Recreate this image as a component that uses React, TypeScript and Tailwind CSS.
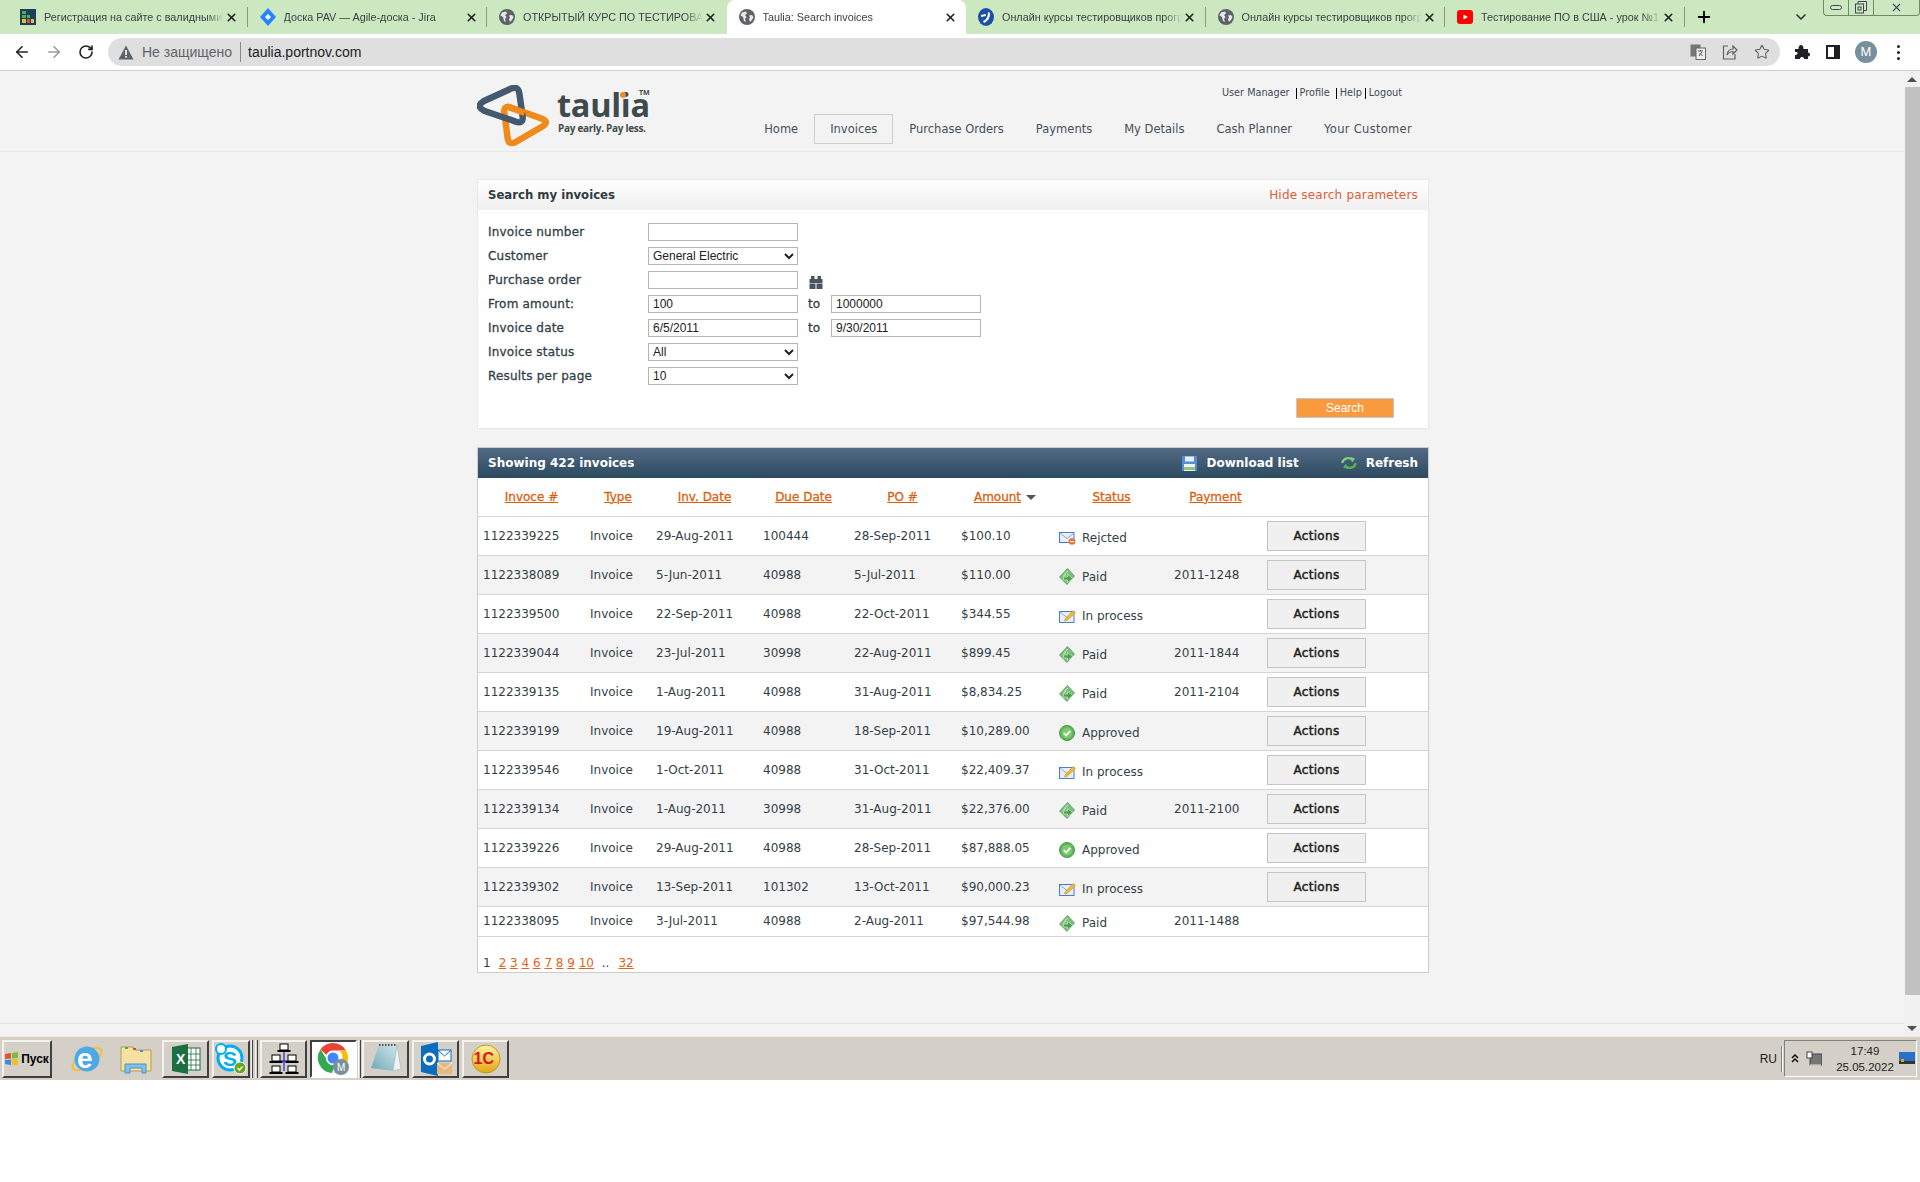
import { ArrowLeft, ArrowRight, RotateCw, Star, ChevronDown, Plus, X } from "lucide-react";
import type { ReactNode } from "react";

function Globe() {
  return (
    <svg width="16" height="16" viewBox="0 0 16 16">
      <circle cx="8" cy="8" r="8" fill="#5f6368" />
      <path d="M3 3.5 7 2.5 8 4.5 6 6 7.5 8 6 10 7 13 5 12 4 8 1.5 6.5ZM10 6.5 13 6 14.5 8 13 11 11 13 10 10 11 8.5Z" fill="#fff" opacity="0.85" />
    </svg>
  );
}

function JiraBoard() {
  return (
    <svg width="16" height="16" viewBox="0 0 16 16">
      <rect width="16" height="16" fill="#1f3d5c" />
      <rect x="2" y="2" width="4" height="3" fill="#4caf50" />
      <rect x="2" y="6" width="4" height="3" fill="#4caf50" />
      <rect x="2" y="10" width="4" height="4" fill="#e6c229" />
      <rect x="7" y="6" width="3" height="3" fill="#4caf50" />
      <rect x="7" y="10" width="3" height="4" fill="#d94f3d" />
      <rect x="11" y="10" width="3" height="4" fill="#e6c229" />
    </svg>
  );
}

function JiraDiamond() {
  return (
    <svg width="16" height="18" viewBox="0 0 16 18">
      <path d="M8 0 16 9 8 18 0 9Z" fill="#2684ff" />
      <path d="M8 6 11 9 8 12 5 9Z" fill="#fff" />
    </svg>
  );
}

function BlueLogo() {
  return (
    <svg width="16" height="18" viewBox="0 0 16 18">
      <ellipse cx="8" cy="9" rx="8" ry="9" fill="#1c4fa8" />
      <path d="M5 13C8 12 10 9 10 4L12 5C12 10 10 13 6 15Z" fill="#fff" />
      <path d="M3 7 8 6 8 8 3 9Z" fill="#fff" />
    </svg>
  );
}

function YouTube() {
  return (
    <svg width="16" height="16" viewBox="0 0 16 16">
      <rect y="1" width="16" height="14" rx="3" fill="#f00" />
      <path d="M6.5 5.5 11 8 6.5 10.5Z" fill="#fff" />
    </svg>
  );
}

const tabs: { icon: ReactNode; title: string; active?: boolean }[] = [
  { icon: <JiraBoard />, title: "Регистрация на сайте с валидными данными" },
  { icon: <JiraDiamond />, title: "Доска PAV — Agile-доска - Jira" },
  { icon: <Globe />, title: "ОТКРЫТЫЙ КУРС ПО ТЕСТИРОВАНИЮ" },
  { icon: <Globe />, title: "Taulia: Search invoices", active: true },
  { icon: <BlueLogo />, title: "Онлайн курсы тестировщиков программного" },
  { icon: <Globe />, title: "Онлайн курсы тестировщиков программного" },
  { icon: <YouTube />, title: "Тестирование ПО в США - урок №1 курса" },
];

function TabStrip() {
  return (
    <div className="flex h-[34px] items-end bg-[#cce8c0] pl-2 font-['Liberation_Sans',sans-serif] text-[10.8px] text-[#3c4043]">
      {tabs.map((t, i) => (
        <div
          key={i}
          className={
            t.active
              ? "flex h-[34px] w-[239.5px] shrink-0 items-center rounded-t-lg bg-white pl-3"
              : "flex h-[34px] w-[239.5px] shrink-0 items-center pl-3"
          }
        >
          <span className="flex w-4 shrink-0 justify-center">{t.icon}</span>
          <span className="ml-2 w-[180px] shrink-0 overflow-hidden whitespace-nowrap [mask-image:linear-gradient(to_right,black_90%,transparent)]">
            {t.title}
          </span>
          <X size={13} strokeWidth={3} className="ml-[1px] shrink-0 text-[#222]" />
          {!t.active && i !== 2 && <span className="ml-[8.5px] h-5 w-px shrink-0 bg-[#8a9a84]" />}
        </div>
      ))}
      <div className="flex h-[34px] w-[38px] shrink-0 items-center justify-center">
        <Plus size={18} strokeWidth={2.5} className="text-black" />
      </div>
      <div className="ml-[68.5px] flex h-[34px] w-[20px] shrink-0 items-center justify-center">
        <ChevronDown size={16} strokeWidth={2.5} className="text-[#333]" />
      </div>
      <div className="mb-auto ml-[12px] flex h-[16px] w-[97px] shrink-0 rounded-b border border-t-0 border-[#6f8a68] text-[#445]">
        <div className="flex w-[25px] items-center justify-center border-r border-[#6f8a68]">
          <span className="h-[5px] w-[12px] rounded-sm border border-[#445]" />
        </div>
        <div className="flex w-[25px] items-center justify-center border-r border-[#6f8a68]">
          <svg width="12" height="13" viewBox="0 0 12 13" fill="none" stroke="#445">
            <rect x="0.5" y="3" width="8" height="9" />
            <path d="M3 3V0.5H11.5V9.5H8.5" />
            <rect x="3" y="6" width="3" height="3" />
          </svg>
        </div>
        <div className="flex flex-1 items-center justify-center">
          <X size={13} strokeWidth={2} />
        </div>
      </div>
    </div>
  );
}

function Toolbar() {
  return (
    <div className="flex h-[37px] items-center border-b border-[#cfcfcf] bg-white pl-[6px] font-['Liberation_Sans',sans-serif]">
      <span className="flex w-8 justify-center">
        <ArrowLeft size={18} strokeWidth={2.2} className="text-[#222]" />
      </span>
      <span className="flex w-8 justify-center">
        <ArrowRight size={18} strokeWidth={2.2} className="text-[#9a9a9a]" />
      </span>
      <span className="flex w-8 justify-center">
        <RotateCw size={16} strokeWidth={2.4} className="text-[#222]" />
      </span>
      <div className="ml-[6px] flex h-[28px] w-[1672px] items-center rounded-full bg-[#dfdfdf] pl-[10px] text-[14px]">
        <svg width="16" height="15" viewBox="0 0 16 15">
          <path d="M8 0.5 15.5 14.5H0.5Z" fill="#5f6368" />
          <rect x="7.2" y="5" width="1.6" height="5" fill="#fff" />
          <rect x="7.2" y="11" width="1.6" height="1.7" fill="#fff" />
        </svg>
        <span className="ml-[8px] text-[#5f6368]">Не защищено</span>
        <span className="ml-2 h-5 w-px shrink-0 bg-[#8a8a8a]" />
        <span className="ml-[7px] text-[#202124]">taulia.portnov.com</span>
        <div className="ml-auto mr-[10px] flex items-center gap-[16px] text-[#5f6368]">
          <svg width="16" height="16" viewBox="0 0 16 16">
            <rect x="0.5" y="0.5" width="10" height="12" fill="#777" />
            <rect x="6" y="4" width="9.5" height="11.5" fill="#eee" stroke="#666" />
            <path d="M8 7H13M10.5 6V7M9 12 12 8M9.5 9 12.5 12" stroke="#555" fill="none" />
          </svg>
          <svg width="16" height="16" viewBox="0 0 16 16" fill="none" stroke="#5f6368" strokeWidth="1.2">
            <path d="M6 2H1.5V15H13V10" />
            <path d="M5 11C5.5 7 8 5 11 5V2L15 6 11 10V7.5C8.5 7.5 6.5 8.5 5 11Z" />
          </svg>
          <Star size={16} strokeWidth={1.6} />
        </div>
      </div>
      <div className="ml-[14px] flex items-center">
        <svg width="16" height="16" viewBox="0 0 16 16" fill="#202124">
          <path d="M1 5H4.5C4.5 2 5.5 1 7 1S9.5 2 9.5 5H14V8.5C15.5 8.5 16 9.5 16 10.5S15.5 12.5 14 12.5V15H10C10 13.5 9 13 8 13S6 13.5 6 15H1V11C2.5 11 3.5 10.5 3.5 9S2.5 8 1 8Z" />
        </svg>
        <span className="ml-[16px] flex h-[14px] w-[14px] border-2 border-r-[6px] border-[#202124]" />
        <span className="ml-[15px] flex h-[22px] w-[22px] items-center justify-center rounded-full bg-[#78909c] text-[13px] text-white">
          M
        </span>
        <span className="ml-[20px] flex flex-col gap-[3px]">
          <i className="h-[3px] w-[3px] rounded-full bg-[#202124]" />
          <i className="h-[3px] w-[3px] rounded-full bg-[#202124]" />
          <i className="h-[3px] w-[3px] rounded-full bg-[#202124]" />
        </span>
      </div>
    </div>
  );
}

function LogoMark() {
  return (
    <svg width="74" height="61" viewBox="2.5 2.5 69 56" fill="none" strokeLinejoin="round">
      <path d="M34 23 62 33Q71 36 63 41L39 55Q32 59 31 51L28 28Q27 21 34 23Z" stroke="#f18a1c" strokeWidth="6" />
      <path d="M9 17 33 6Q41 2 42 10L45 31Q46 39 38 36L9 26Q1 22 9 17Z" stroke="#44596e" strokeWidth="6" />
      <path d="M30 22 47 28" stroke="#f18a1c" strokeWidth="6" />
    </svg>
  );
}

function Header() {
  const nav = ["Home", "Invoices", "Purchase Orders", "Payments", "My Details", "Cash Planner", "Your Customer"];
  return (
    <div className="h-[81px] border-b border-[#e8e8e8]">
      <div className="ml-[477px] flex w-[952px] justify-between">
        <div className="flex pt-[14px]">
          <LogoMark />
          <div className="relative ml-[6px] font-['Open_Sans',sans-serif] text-[#3f4a4c]">
            <div className="mt-[-2px] h-[37px] text-[32.5px] leading-[44px] font-bold tracking-[-0.3px]">taulia</div>
            <div className="mt-[1px] pl-[1px] text-[10px] leading-[14px] font-bold tracking-[-0.3px]">Pay early. Pay less.</div>
            <span className="absolute top-[3px] left-[82px] text-[7px] font-bold">TM</span>
            <span className="absolute top-[7px] left-[63px] h-[6px] w-[6px] rounded-full bg-[#f18a1c]" />
          </div>
        </div>
        <div className="flex flex-col items-end">
          <div className="mt-[15px] flex h-[14px] items-center pr-[27px] text-[9.7px] text-[#3f4a55]">
            <span>User Manager</span>
            <span className="ml-[6px] h-[11px] w-px shrink-0 bg-black" />
            <span className="ml-[3px]">Profile</span>
            <span className="ml-[6px] h-[11px] w-px shrink-0 bg-black" />
            <span className="ml-[3px]">Help</span>
            <span className="ml-[3px] h-[11px] w-px shrink-0 bg-black" />
            <span className="ml-[3px]">Logout</span>
          </div>
          <div className="mt-[14px] flex pr-[1px] text-[11.5px]">
            {nav.map((n) => (
              <span
                key={n}
                className={
                  n === "Invoices"
                    ? "flex h-[30px] items-center border border-[#cfcfcf] px-[15px] pt-px text-[#44505c]"
                    : n === "Your Customer"
                      ? "flex h-[30px] items-center border border-transparent px-[15px] pt-px tracking-[0.3px] text-[#44505c]"
                      : "flex h-[30px] items-center border border-transparent px-[15px] pt-px text-[#44505c]"
                }
              >
                {n}
              </span>
            ))}
          </div>
        </div>
      </div>
    </div>
  );
}

function Field({ label, children }: { label: string; children: ReactNode }) {
  return (
    <div className="flex h-6 items-center">
      <span className="w-[160px] tracking-[0.2px] text-[#333f48] [-webkit-text-stroke:0.3px]">{label}</span>
      {children}
    </div>
  );
}

const inputCls =
  "h-[18px] w-[150px] border border-[#b5b5b5] bg-white px-[4px] font-['Liberation_Sans',sans-serif] text-[12px] text-[#222] outline-none";
const selectCls =
  "h-[18px] w-[150px] border border-[#b5b5b5] bg-white font-['Liberation_Sans',sans-serif] text-[12px] text-[#222] outline-none";

function To() {
  return <span className="w-[33px] pl-[10px] text-[#333f48] [-webkit-text-stroke:0.3px]">to</span>;
}

function SearchPanel() {
  return (
    <div className="mt-[27px] border border-[#e8e8e8] bg-white">
      <div className="flex h-[30px] items-center justify-between bg-gradient-to-b from-white to-[#f0f0f0] px-[10px]">
        <span className="pt-px text-[11.7px] font-bold text-[#2f3a42]">Search my invoices</span>
        <span className="tracking-[0.2px] text-[#d9603a]">Hide search parameters</span>
      </div>
      <div className="pt-[10px] pr-[34px] pb-[10px] pl-[10px]">
        <Field label="Invoice number">
          <input readOnly className={inputCls} />
        </Field>
        <Field label="Customer">
          <select className={selectCls}>
            <option>General Electric</option>
          </select>
        </Field>
        <Field label="Purchase order">
          <input readOnly className={inputCls} />
          <svg width="14" height="13" viewBox="0 0 14 13" className="mt-[5px] ml-[11px]" fill="#4a5560">
            <rect x="2" y="0" width="3.5" height="3" />
            <rect x="8.5" y="0" width="3.5" height="3" />
            <rect x="0.5" y="3" width="13" height="4" />
            <rect x="0.5" y="7.5" width="6" height="5.5" />
            <rect x="7.5" y="7.5" width="6" height="5.5" />
          </svg>
        </Field>
        <Field label="From amount:">
          <input readOnly value="100" className={inputCls} />
          <To />
          <input readOnly value="1000000" className={inputCls} />
        </Field>
        <Field label="Invoice date">
          <input readOnly value="6/5/2011" className={inputCls} />
          <To />
          <input readOnly value="9/30/2011" className={inputCls} />
        </Field>
        <Field label="Invoice status">
          <select className={selectCls}>
            <option>All</option>
          </select>
        </Field>
        <Field label="Results per page">
          <select className={selectCls}>
            <option>10</option>
          </select>
        </Field>
        <div className="mt-[10px] flex justify-end">
          <button className="h-[20px] w-[98px] border border-[#c8c8c8] bg-[#f99a3f] font-['Liberation_Sans',sans-serif] text-[12px] text-white">
            Search
          </button>
        </div>
      </div>
    </div>
  );
}

function StatusIcon({ status }: { status: string }) {
  if (status === "Paid")
    return (
      <svg width="16" height="17" viewBox="0 0 16 17">
        <path d="M8.5 0.5 15.5 8 8 16.5 0.5 9Z" fill="#79c079" stroke="#4c914c" strokeWidth="0.7" />
        <path d="M5.5 6 9 3M4 8.5 7 6" stroke="#cdeccd" strokeWidth="1" />
        <path d="M4.5 9H8.5V6.5L14 10.5 8.5 14.5V12H4.5Z" fill="#4f9e4f" stroke="#d8f0d8" strokeWidth="0.6" />
      </svg>
    );
  if (status === "Approved")
    return (
      <svg width="16" height="16" viewBox="0 0 16 16">
        <circle cx="8" cy="8" r="7.5" fill="#5cb85c" stroke="#4a9a4a" />
        <circle cx="8" cy="8" r="5.2" fill="#7ccb6e" />
        <path d="M4.8 8.2 7.2 10.5 11.2 5.8" fill="none" stroke="#fff" strokeWidth="1.8" />
      </svg>
    );
  if (status === "Rejcted")
    return (
      <svg width="17" height="14" viewBox="0 0 17 14">
        <rect x="0.5" y="1.5" width="14.5" height="10" fill="#e8eef8" stroke="#4a7cc4" />
        <path d="M1 2 8 7.5 15 2" fill="none" stroke="#8aa8d8" />
        <circle cx="13" cy="10.5" r="3.3" fill="#e8702a" />
        <rect x="11" y="10" width="4" height="1.2" fill="#fff" />
      </svg>
    );
  return (
    <svg width="17" height="14" viewBox="0 0 17 14">
      <rect x="0.5" y="2.5" width="14.5" height="11" fill="#e8eef8" stroke="#4a7cc4" />
      <path d="M1 3 8 8.5 15 3" fill="none" stroke="#8aa8d8" />
      <path d="M6 10 14 1.5 16.5 3.5 8 11.5 5.5 12Z" fill="#f0b93a" stroke="#b98a20" strokeWidth="0.5" />
    </svg>
  );
}

const rows = [
  ["1122339225", "29-Aug-2011", "100444", "28-Sep-2011", "$100.10", "Rejcted", ""],
  ["1122338089", "5-Jun-2011", "40988", "5-Jul-2011", "$110.00", "Paid", "2011-1248"],
  ["1122339500", "22-Sep-2011", "40988", "22-Oct-2011", "$344.55", "In process", ""],
  ["1122339044", "23-Jul-2011", "30998", "22-Aug-2011", "$899.45", "Paid", "2011-1844"],
  ["1122339135", "1-Aug-2011", "40988", "31-Aug-2011", "$8,834.25", "Paid", "2011-2104"],
  ["1122339199", "19-Aug-2011", "40988", "18-Sep-2011", "$10,289.00", "Approved", ""],
  ["1122339546", "1-Oct-2011", "40988", "31-Oct-2011", "$22,409.37", "In process", ""],
  ["1122339134", "1-Aug-2011", "30998", "31-Aug-2011", "$22,376.00", "Paid", "2011-2100"],
  ["1122339226", "29-Aug-2011", "40988", "28-Sep-2011", "$87,888.05", "Approved", ""],
  ["1122339302", "13-Sep-2011", "101302", "13-Oct-2011", "$90,000.23", "In process", ""],
  ["1122338095", "3-Jul-2011", "40988", "2-Aug-2011", "$97,544.98", "Paid", "2011-1488"],
];

const headers = ["Invoce #", "Type", "Inv. Date", "Due Date", "PO #", "Amount", "Status", "Payment"];

function ResultsPanel() {
  return (
    <div className="mt-[18px] border border-[#cccccc] bg-white">
      <div className="flex h-[30px] items-center bg-gradient-to-b from-[#526a84] to-[#2c4a60] pr-[10px] pl-[10px] font-bold text-white">
        <span>Showing 422 invoices</span>
        <svg width="15" height="15" viewBox="0 0 15 15" className="ml-auto">
          <rect width="15" height="15" fill="#5a8ad4" />
          <rect x="3" y="0.5" width="9" height="5" fill="#e8eef8" />
          <rect x="2" y="8" width="11" height="7" fill="#eef3fa" />
          <rect x="2" y="11" width="11" height="3" fill="#8cc878" />
        </svg>
        <span className="ml-[9px]">Download list</span>
        <svg width="16" height="14" viewBox="0 0 16 14" className="ml-[42px]" fill="none" strokeWidth="2.4" strokeLinecap="round">
          <path d="M1.5 6C3 2 8 1 11.5 3.5" stroke="#7ed17e" />
          <path d="M9.5 1 14 2.5 11 6.5Z" fill="#7ed17e" stroke="none" />
          <path d="M14.5 8C13 12 8 13 4.5 10.5" stroke="#55b455" />
          <path d="M6.5 13 2 11.5 5 7.5Z" fill="#55b455" stroke="none" />
        </svg>
        <span className="ml-[9px]">Refresh</span>
      </div>
      <table className="w-full table-fixed border-collapse text-[#333f48]">
        <colgroup>
          <col className="w-[107px]" />
          <col className="w-[66px]" />
          <col className="w-[107px]" />
          <col className="w-[91px]" />
          <col className="w-[107px]" />
          <col className="w-[98px]" />
          <col className="w-[115px]" />
          <col className="w-[93px]" />
          <col />
        </colgroup>
        <thead>
          <tr className="h-[38px] border-b border-[#d5d5d5]">
            {headers.map((h) => (
              <th key={h} className="text-center font-normal [-webkit-text-stroke:0.3px]">
                <span className="text-[#d95f0e] underline">{h}</span>
                {h === "Amount" && (
                  <span className="ml-[5px] inline-block border-x-[5px] border-t-[5px] border-x-transparent border-t-[#555] align-middle" />
                )}
              </th>
            ))}
            <th />
          </tr>
        </thead>
        <tbody>
          {rows.map((r, i) => (
            <tr
              key={r[0]}
              className={
                (i === 10 ? "h-[30px] " : "h-[39px] ") +
                (i % 2 === 1 ? "border-b border-[#d5d5d5] bg-[#f3f3f3]" : "border-b border-[#d5d5d5]")
              }
            >
              <td className="pl-[5px]">{r[0]}</td>
              <td className="pl-[5px]">Invoice</td>
              <td className="pl-[5px]">{r[1]}</td>
              <td className="pl-[5px]">{r[2]}</td>
              <td className="pl-[5px]">{r[3]}</td>
              <td className="pl-[5px]">{r[4]}</td>
              <td className="pl-[5px]">
                <span className="mt-[4px] flex items-center">
                  <span className="flex w-[23px]">
                    <StatusIcon status={r[5]} />
                  </span>
                  {r[5]}
                </span>
              </td>
              <td className="pl-[5px]">{r[6]}</td>
              <td className="pl-[5px]">
                {i < 10 && (
                  <button className="h-[30px] w-[99px] border border-[#c4c4c4] bg-[#f0f0f0] text-[12px] tracking-[0.3px] text-[#222] [-webkit-text-stroke:0.45px]">
                    Actions
                  </button>
                )}
              </td>
            </tr>
          ))}
        </tbody>
      </table>
      <div className="flex h-[35px] items-end pl-[5px] text-[#333f48]">
        <span className="mr-[8px]">1</span>
        {["2", "3", "4", "6", "7", "8", "9", "10"].map((p) => (
          <span key={p} className="mr-[3.8px] text-[#e0641c] underline">
            {p}
          </span>
        ))}
        <span className="mr-[9px] ml-[4px]">..</span>
        <span className="text-[#e0641c] underline">32</span>
      </div>
    </div>
  );
}

function Scrollbar() {
  return (
    <div className="flex w-4 flex-col items-center bg-[#f1f1f1]">
      <span className="mt-[6px] h-0 w-0 border-x-[5px] border-b-[5px] border-x-transparent border-b-[#505050]" />
      <span className="mt-[5px] h-[908px] w-[15px] bg-[#c1c1c1]" />
      <span className="mt-auto mb-[5px] h-0 w-0 border-x-[5px] border-t-[5px] border-x-transparent border-t-[#505050]" />
    </div>
  );
}

function TaskButton({ children, pressed, wide }: { children: ReactNode; pressed?: boolean; wide?: boolean }) {
  const base = "flex h-[38px] shrink-0 items-center justify-center border-2 ";
  const width = wide ? "w-[38px] " : "w-[47px] ";
  const look = pressed
    ? "border-t-[#404040] border-l-[#404040] border-r-white border-b-white bg-white"
    : "border-t-[#f4f2ee] border-l-[#f4f2ee] border-r-[#404040] border-b-[#404040]";
  return <div className={base + width + look}>{children}</div>;
}

function ExcelIcon() {
  return (
    <svg width="30" height="30" viewBox="0 0 30 30">
      <rect x="14" y="4" width="15" height="22" fill="#fff" stroke="#1d6f42" />
      <path d="M14 10H29M14 16H29M14 21H29M20 4V26M25 4V26" stroke="#1d6f42" strokeWidth="0.8" />
      <path d="M1 3 17 0V30L1 27Z" fill="#1d6f42" />
      <text x="5" y="20" fontSize="14" fontWeight="700" fill="#fff" fontFamily="Liberation Sans, sans-serif">X</text>
    </svg>
  );
}

function SkypeIcon() {
  return (
    <svg width="32" height="32" viewBox="0 0 32 32">
      <circle cx="15" cy="15" r="12" fill="#fff" stroke="#00aff0" strokeWidth="3" />
      <circle cx="6" cy="6" r="5" fill="#fff" stroke="#00aff0" strokeWidth="2" />
      <text x="8" y="23" fontSize="21" fontWeight="700" fill="#00aff0" fontFamily="Liberation Sans, sans-serif">S</text>
      <circle cx="25" cy="25" r="6" fill="#6aa51e" stroke="#fff" />
      <path d="M22.5 25 24.5 27 27.5 23.5" fill="none" stroke="#fff" strokeWidth="1.3" />
    </svg>
  );
}

function NetworkIcon() {
  const pc = (x: number, y: number) => (
    <g key={x + "-" + y}>
      <rect x={x} y={y} width="8" height="6" fill="#fff" stroke="#000" />
      <rect x={x - 2.5} y={y + 6} width="13" height="2" fill="#000" />
    </g>
  );
  return (
    <svg width="32" height="32" viewBox="0 0 32 32">
      <path d="M16 8V28M9 18H23" stroke="#0000e0" strokeWidth="1" />
      {pc(12, 1)}
      {pc(4, 12)}
      {pc(20, 12)}
      {pc(4, 23)}
      {pc(20, 23)}
    </svg>
  );
}

function ChromeIcon() {
  return (
    <svg width="34" height="34" viewBox="0 0 34 34">
      <path d="M16 1A15 15 0 0 1 29 8.5H16A7 7 0 0 0 9.5 13L3.5 7.5A15 15 0 0 1 16 1Z" fill="#ea4335" />
      <path d="M29 8.5A15 15 0 0 1 17 31L23 20A7 7 0 0 0 22 8.5Z" fill="#fbbc04" />
      <path d="M3.5 7.5 9.5 17A7 7 0 0 0 18 23L15 31A15 15 0 0 1 3.5 7.5Z" fill="#34a853" />
      <circle cx="16" cy="16" r="7" fill="#fff" />
      <circle cx="16" cy="16" r="5.5" fill="#4285f4" />
      <circle cx="24" cy="25" r="8" fill="#78909c" />
      <text x="20" y="29" fontSize="10" fill="#fff" fontFamily="Liberation Sans, sans-serif">M</text>
    </svg>
  );
}

function NotepadIcon() {
  return (
    <svg width="32" height="32" viewBox="0 0 32 32">
      <defs>
        <linearGradient id="pad" x1="0" y1="1" x2="1" y2="0">
          <stop offset="0" stopColor="#6fa8b8" />
          <stop offset="1" stopColor="#cfe6ea" />
        </linearGradient>
      </defs>
      <path d="M9 2H27L23 28 1 25Z" fill="url(#pad)" />
      <path d="M27 2 31 26 23 28Z" fill="#eef2f2" stroke="#9aa" strokeWidth="0.5" />
      <path d="M9 2H27" stroke="#555" strokeDasharray="1.5 1.5" strokeWidth="2" />
    </svg>
  );
}

function OutlookIcon() {
  return (
    <svg width="32" height="34" viewBox="0 0 32 34">
      <path d="M1 4 18 0V34L1 30Z" fill="#0a6ebd" />
      <circle cx="9.5" cy="17" r="5" fill="none" stroke="#fff" strokeWidth="3" />
      <rect x="18" y="8" width="13" height="11" fill="#fff" stroke="#0a6ebd" />
      <path d="M18 8 24.5 14 31 8" fill="none" stroke="#0a6ebd" />
      <rect x="17" y="21" width="15" height="11" fill="#e8b77c" />
      <path d="M17 21 24.5 27 32 21" fill="none" stroke="#fff" />
    </svg>
  );
}

function OneCIcon() {
  return (
    <svg width="30" height="30" viewBox="0 0 30 30">
      <defs>
        <linearGradient id="onec" x1="0" y1="0" x2="0" y2="1">
          <stop offset="0" stopColor="#fff2a8" />
          <stop offset="1" stopColor="#e0a810" />
        </linearGradient>
      </defs>
      <circle cx="15" cy="15" r="14" fill="url(#onec)" stroke="#c8961a" />
      <text x="2.5" y="20" fontSize="16" fontWeight="700" fill="#d81818" fontFamily="Liberation Sans, sans-serif">1С</text>
    </svg>
  );
}

function Taskbar() {
  return (
    <div className="flex h-[44px] items-center border-t border-[#ebe9e4] bg-[#d4d0c8] pl-[2px] font-['Liberation_Sans',sans-serif]">
      <div className="flex h-[38px] w-[50px] shrink-0 items-center justify-center gap-[2px] border-2 border-t-[#f4f2ee] border-r-[#404040] border-b-[#404040] border-l-[#f4f2ee] text-[12px] font-bold text-black">
        <svg width="14" height="14" viewBox="0 0 14 14">
          <path d="M0 2 6 1 6 6.5 0 7Z" fill="#e8542a" />
          <path d="M7 1 13 0 13 6 7 6.5Z" fill="#7fba3a" />
          <path d="M0 8 6 7.5 6 13 0 12Z" fill="#3a8ee0" />
          <path d="M7 7.5 13 7 13 13 7 13Z" fill="#f4c020" />
        </svg>
        Пуск
      </div>
      <span className="ml-[19px] flex w-[32px] justify-center">
        <svg width="32" height="32" viewBox="0 0 32 32">
          <ellipse cx="16" cy="16" rx="17" ry="7" transform="rotate(-35 16 16)" fill="none" stroke="#f1c232" strokeWidth="2" />
          <circle cx="16" cy="16" r="12.5" fill="#4ba9e6" />
          <text x="6" y="25" fontSize="28" fontWeight="700" fill="#fff" fontFamily="Liberation Sans, sans-serif">e</text>
        </svg>
      </span>
      <span className="ml-[17px] flex w-[32px] justify-center">
        <svg width="32" height="30" viewBox="0 0 32 30">
          <path d="M1 3H13L15 6H31V27H1Z" fill="#f5e1a4" stroke="#b89b52" />
          <rect x="5" y="3" width="3" height="2" fill="#3cb54a" />
          <rect x="13" y="4" width="3" height="2" fill="#d84a3a" />
          <rect x="20" y="6" width="3" height="2" fill="#3a8ee0" />
          <path d="M5 20H26V29H22V24H10V29H5Z" fill="#7ec4ea" stroke="#4a90c8" />
        </svg>
      </span>
      <span className="ml-[10px] flex">
        <TaskButton>
          <ExcelIcon />
        </TaskButton>
      </span>
      <span className="ml-[3px] flex">
        <TaskButton wide>
          <SkypeIcon />
        </TaskButton>
      </span>
      <span className="ml-[1px] h-[38px] w-[2px] shrink-0 border-x border-r-[#404040] border-l-[#f4f2ee]" />
      <span className="ml-[2px] h-[38px] w-[3px] shrink-0 border-x border-r-[#404040] border-l-[#f4f2ee]" />
      <span className="ml-[2px] flex">
        <TaskButton>
          <NetworkIcon />
        </TaskButton>
      </span>
      <span className="ml-[3px] flex">
        <TaskButton pressed>
          <ChromeIcon />
        </TaskButton>
      </span>
      <span className="ml-[1px] h-[38px] w-[3px] shrink-0 border-x border-r-[#404040] border-l-white" />
      <span className="ml-[1px] flex">
        <TaskButton>
          <NotepadIcon />
        </TaskButton>
      </span>
      <span className="ml-[3px] flex">
        <TaskButton>
          <OutlookIcon />
        </TaskButton>
      </span>
      <span className="ml-[3px] flex">
        <TaskButton>
          <OneCIcon />
        </TaskButton>
      </span>
      <span className="ml-auto text-[12px] text-[#222]">RU</span>
      <span className="ml-[4px] h-[26px] w-[2px] shrink-0 border-x border-r-white border-l-[#808080]" />
      <div className="mr-[3px] ml-[1px] flex h-[37px] w-[133px] shrink-0 items-center border border-t-[#808080] border-r-white border-b-white border-l-[#808080] pl-[6px] text-[12px] text-[#222]">
        <svg width="8" height="9" viewBox="0 0 8 9" fill="none" stroke="#000" strokeWidth="1.4">
          <path d="M1 4 4 1 7 4M1 8 4 5 7 8" />
        </svg>
        <svg width="16" height="16" viewBox="0 0 16 16" className="ml-[7px]">
          <rect x="4" y="3" width="12" height="11" fill="#777" stroke="#444" />
          <rect x="1" y="1" width="5" height="6" fill="#fff" stroke="#444" />
          <path d="M4 14H15" stroke="#fff" />
        </svg>
        <div className="ml-[13px] flex w-[60px] flex-col items-center text-[11.5px] leading-[16px]">
          <span>17:49</span>
          <span className="whitespace-nowrap">25.05.2022</span>
        </div>
        <svg width="16" height="13" viewBox="0 0 16 13" className="ml-[4px]">
          <rect width="16" height="12" fill="#2a6fc9" />
          <rect y="9" width="16" height="3" fill="#333" />
          <rect x="2" y="7" width="3" height="3" fill="#e0a020" />
        </svg>
      </div>
    </div>
  );
}

export default function App() {
  return (
    <div className="flex h-[1182px] flex-col overflow-hidden bg-white">
      <TabStrip />
      <Toolbar />
      <div className="flex h-[965px] shrink-0">
        <div className="flex min-w-0 flex-1 flex-col bg-[#f3f3f3] font-['DejaVu_Sans',sans-serif] text-[12px]">
          <Header />
          <div className="ml-[477px] w-[952px]">
            <SearchPanel />
            <ResultsPanel />
          </div>
          <div className="mt-auto h-[13px] border-t border-[#e4e4e4]" />
        </div>
        <Scrollbar />
      </div>
      <Taskbar />
    </div>
  );
}
